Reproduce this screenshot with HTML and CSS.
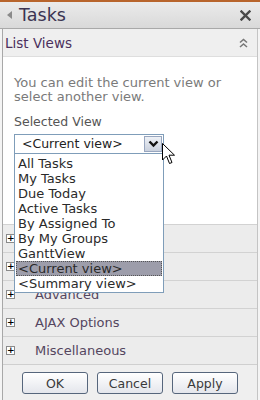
FILE: index.html
```html
<!DOCTYPE html>
<html>
<head>
<meta charset="utf-8">
<link rel="stylesheet" href="styles.css">
</head>
<body>
<div class="pane">
  <div class="header">
    <svg class="tri" width="6" height="8" viewBox="0 0 6 8"><path d="M5 0 L0 4 L5 8 Z" fill="#8a8a8a"/></svg>
    <span class="title">Tasks</span>
    <svg class="close" width="11" height="11" viewBox="0 0 11 11"><path d="M1.5 1.5 L9.5 9.5 M9.5 1.5 L1.5 9.5" stroke="#4a4a4a" stroke-width="2.4" stroke-linecap="square"/></svg>
  </div>
  <div class="framed">
    <div class="section-head">
      <span>List Views</span>
      <svg class="chev" width="9" height="10" viewBox="0 0 9 10"><path d="M1 4.5 L4.5 1.5 L8 4.5 M1 9 L4.5 6 L8 9" stroke="#777" stroke-width="1.6" fill="none"/></svg>
    </div>
    <div class="content">
      <p class="desc">You can edit the current view or select another view.</p>
      <div class="label">Selected View</div>
      <div class="selectwrap">
        <div class="select">
          <span class="value">&lt;Current view&gt;</span>
          <span class="dbtn"><svg width="11" height="8" viewBox="0 0 11 8"><path d="M1.5 1.5 L5.5 5.5 L9.5 1.5" stroke="#111" stroke-width="2.4" fill="none"/></svg></span>
        </div>
        <ul class="list">
          <li>All Tasks</li>
          <li>My Tasks</li>
          <li>Due Today</li>
          <li>Active Tasks</li>
          <li>By Assigned To</li>
          <li>By My Groups</li>
          <li>GanttView</li>
          <li class="sel">&lt;Current view&gt;</li>
          <li>&lt;Summary view&gt;</li>
        </ul>
        <svg class="cursor" width="14" height="22" viewBox="0 0 14 22"><path d="M0.5 0.5 L0.5 17 L4.5 13 L7.5 20.5 L10 19.5 L7 12.2 L12.5 12.2 Z" fill="#fff" stroke="#000" stroke-width="1"/></svg>
      </div>
    </div>
    <div class="rows">
      <div class="row"><span class="plus">+</span></div>
      <div class="row"><span class="plus">+</span></div>
      <div class="row"><span class="plus">+</span><span class="rtext">Advanced</span></div>
      <div class="row"><span class="plus">+</span><span class="rtext">AJAX Options</span></div>
      <div class="row"><span class="plus">+</span><span class="rtext">Miscellaneous</span></div>
    </div>
    <div class="buttons">
      <button class="btn">OK</button>
      <button class="btn">Cancel</button>
      <button class="btn">Apply</button>
    </div>
  </div>
</div>
</body>
</html>
```
FILE: styles.css
```css
html, body {
  margin: 0;
  padding: 0;
}
body {
  width: 260px;
  height: 400px;
  overflow: hidden;
  background: #f4f4f4;
  font-family: "DejaVu Sans", Verdana, sans-serif;
}
.pane {
  height: 400px;
  box-sizing: border-box;
  border-top: 2px solid #b8652c;
  display: flex;
  flex-direction: column;
}
.header {
  height: 26px;
  flex: none;
  display: flex;
  align-items: center;
  background: linear-gradient(#ebebeb, #d9d9d9);
  border-bottom: 1px solid #a9a9a9;
  padding-left: 7px;
  padding-right: 9px;
}
.tri {
  margin-right: 6px;
}
.title {
  font-size: 17.5px;
  color: #3b3452;
  flex: 1;
}
.framed {
  flex: 1;
  display: flex;
  flex-direction: column;
  margin-left: 2px;
  margin-right: 2px;
  border-left: 1px solid #a8a8a8;
  border-right: 1px solid #c4c4c4;
}
.section-head {
  height: 28px;
  flex: none;
  box-sizing: border-box;
  display: flex;
  align-items: center;
  background: #efefef;
  border-bottom: 1px solid #dedede;
  padding-left: 2px;
  padding-right: 9px;
  font-size: 13.5px;
  color: #4b2f5c;
}
.section-head span {
  flex: 1;
}
.content {
  height: 167px;
  flex: none;
  box-sizing: border-box;
  background: #fff;
  padding: 19px 0 0 11px;
}
.desc {
  margin: 0;
  width: 232px;
  font-size: 13px;
  line-height: 13.5px;
  color: #7a7a7a;
}
.label {
  margin-top: 11.5px;
  font-size: 12.5px;
  line-height: 14px;
  color: #555;
}
.selectwrap {
  position: relative;
  margin-top: 5px;
  width: 150px;
}
.select {
  height: 20px;
  box-sizing: border-box;
  border: 1px solid #7f9db9;
  display: flex;
  align-items: center;
  padding-left: 7px;
  padding-right: 1px;
  background: #fff;
}
.value {
  flex: 1;
  font-size: 12.5px;
  color: #222;
}
.dbtn {
  width: 18px;
  height: 16px;
  box-sizing: border-box;
  border: 1px solid #98a6bf;
  background: linear-gradient(#eef1f6, #c9d0dd);
  display: flex;
  align-items: center;
  justify-content: center;
}
.list {
  position: absolute;
  top: 19px;
  left: 0;
  width: 150px;
  box-sizing: border-box;
  margin: 0;
  padding: 2px 1px 1px 1px;
  list-style: none;
  background: #fff;
  border: 1px solid #7f9db9;
}
.list li {
  height: 15px;
  box-sizing: border-box;
  line-height: 15px;
  padding-left: 2px;
  font-size: 13px;
  color: #2a2a2a;
  white-space: nowrap;
}
.list li.sel {
  background: #9d9daa;
  border: 1px dotted #555;
  line-height: 13px;
  padding-left: 1px;
}
.cursor {
  position: absolute;
  left: 148px;
  top: 9px;
}
.rows {
  flex: none;
  display: flex;
  flex-direction: column;
}
.row {
  height: 28px;
  box-sizing: border-box;
  border-top: 1px solid #d2d2d2;
  background: #ececec;
  display: flex;
  align-items: center;
  padding-left: 3px;
}
.plus {
  width: 9px;
  height: 9px;
  box-sizing: border-box;
  border: 1px solid #8a8a8a;
  background: #fff;
  font-size: 9px;
  line-height: 6px;
  text-align: center;
  color: #000;
  font-weight: bold;
  margin-right: 20px;
}
.rtext {
  font-size: 13px;
  color: #54465f;
}
.buttons {
  flex: 1;
  border-top: 1px solid #cfcfcf;
  background: #efefef;
  display: flex;
  justify-content: center;
  align-items: flex-start;
  gap: 9px;
  padding-top: 7px;
}
.btn {
  width: 66px;
  height: 22px;
  border: 1px solid #56667c;
  border-radius: 3px;
  background: linear-gradient(#ffffff, #e4e6ec);
  font-family: "DejaVu Sans", Verdana, sans-serif;
  font-size: 12.5px;
  color: #3a3a3a;
  padding: 0;
}
```
